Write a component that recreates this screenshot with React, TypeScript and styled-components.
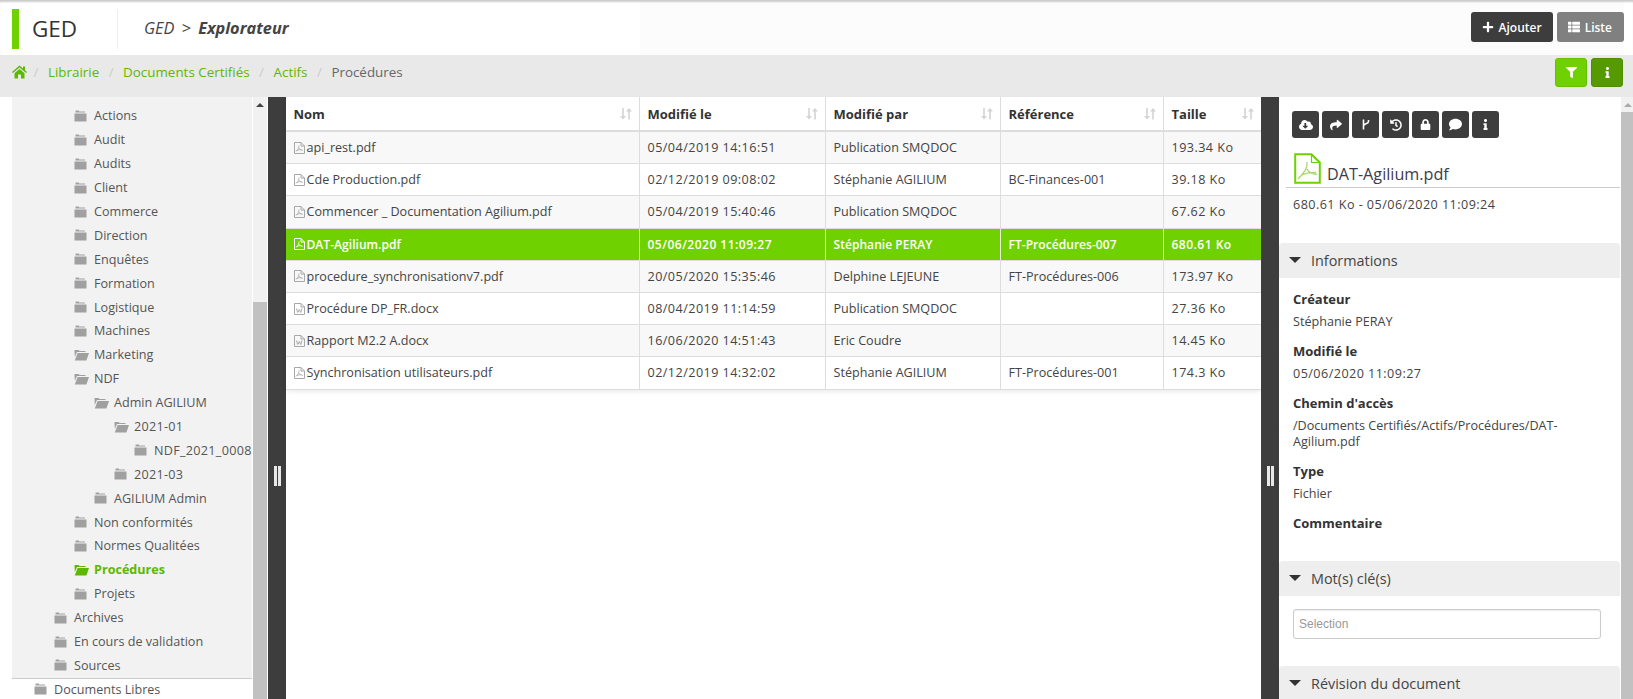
import React from "react";
import styled, { createGlobalStyle } from "styled-components";
import {
  FaCloudDownloadAlt,
  FaComment,
  FaFilter,
  FaHistory,
  FaInfo,
  FaLock,
  FaPlus,
  FaShare,
  FaThList,
} from "react-icons/fa";

const GREEN = "#70d100";
const DARK = "#3d3d3d";

const GlobalStyle = createGlobalStyle`
  html, body {
    margin: 0;
    height: 100%;
    overflow: hidden;
    background: #fff;
    font-family: "Open Sans", "Liberation Sans", sans-serif;
    font-size: 12.6px;
    color: #444;
  }
  * { box-sizing: border-box; }
`;

const Page = styled.div`
  width: 1633px;
  height: 699px;
  display: flex;
  flex-direction: column;
  overflow: hidden;
`;

const Header = styled.header`
  height: 55px;
  flex: none;
  display: flex;
  align-items: center;
  padding: 2px 9px 0 12px;
  background: linear-gradient(to right, #fff 640px, #fcfcfc 640px, #fcfcfc 1624px, #fff 1624px);
  box-shadow: inset 0 3px 2px -1px #ccc;
`;

const Brand = styled.div`
  width: 105px;
  height: 40px;
  border-left: 7px solid ${GREEN};
  padding-left: 13px;
  font-size: 22.5px;
  line-height: 40px;
  color: #333;
`;

const PageTitle = styled.div`
  flex: 1;
  height: 40px;
  line-height: 38px;
  border-left: 1px solid #eee;
  padding-left: 26px;
  font-size: 16.3px;
  font-style: italic;
  word-spacing: 3px;
  color: #444;

  b {
    font-weight: 700;
  }
`;

const HeaderButton = styled.button<{ $muted?: boolean }>`
  height: 30px;
  margin: 0 0 3px 4px;
  padding: 0 ${(p) => (p.$muted ? 12 : 11)}px 0 11px;
  display: inline-flex;
  align-items: center;
  gap: 5px;
  border: 0;
  border-radius: 3px;
  background: ${(p) => (p.$muted ? "#808080" : DARK)};
  color: #fff;
  font: 600 12px "Open Sans", sans-serif;
`;

const Crumbs = styled.nav`
  height: 42px;
  flex: none;
  background: #e9e9e9;
  display: flex;
  align-items: flex-start;
  padding: 3px 10px 0 12px;
  font-size: 13.4px;
  color: #666;
`;

const CrumbList = styled.div`
  flex: 1;
  display: flex;
  align-items: center;
  height: 24px;
  margin-top: 2px;
`;

const Crumb = styled.span<{ $current?: boolean }>`
  color: ${(p) => (p.$current ? "#666" : "#5cb800")};
  display: inline-flex;
  align-items: center;
`;

const HomeCrumb = styled(Crumb)`
  margin-right: -3px;
`;

const Sep = styled.span`
  color: #ccc;
  padding: 0 9.5px;
`;

const SquareButton = styled.button<{ $pressed?: boolean }>`
  width: 32px;
  height: 29px;
  margin-left: 4px;
  padding: 0;
  display: inline-flex;
  align-items: center;
  justify-content: center;
  border: 1px solid ${(p) => (p.$pressed ? "#4e8f00" : "#66c000")};
  border-radius: 3px;
  background: ${(p) => (p.$pressed ? "#559a00" : GREEN)};
  color: #fff;
`;

const Main = styled.main`
  flex: 1;
  min-height: 0;
  display: flex;
`;

const TreeColumn = styled.aside`
  width: 268px;
  flex: none;
  padding-left: 12px;
  display: flex;
`;

const Tree = styled.div`
  width: 240px;
  flex: none;
  overflow: hidden;
  display: flex;
  flex-direction: column;
`;

const TreeBody = styled.div`
  background: #f2f2f2;
  padding-top: 7px;
  padding-bottom: 1px;
  border-bottom: 1px solid #ccc;
`;

const TreeRow = styled.div<{ $level: number; $active?: boolean; $numeric?: boolean }>`
  height: 23.9px;
  display: flex;
  align-items: center;
  white-space: nowrap;
  padding-left: ${(p) => 22 + p.$level * 20}px;
  color: ${(p) => (p.$active ? "#5cb800" : "#555")};
  font-weight: ${(p) => (p.$active ? 700 : 400)};
  letter-spacing: ${(p) => (p.$numeric ? "0.3px" : "0")};
`;

const FolderSlot = styled.span`
  width: 20px;
  flex: none;
  display: flex;
  align-items: center;
`;

const Track = styled.div`
  width: 14px;
  margin-left: 1px;
  flex: none;
  background: #f1f1f1;
  position: relative;
  display: flex;
  flex-direction: column;
`;

const ScrollArrow = styled.div`
  height: 15px;
  flex: none;
  display: flex;
  align-items: center;
  justify-content: center;

  &::before {
    content: "";
    border: 4px solid transparent;
    border-top: 0;
    border-bottom: 4px solid ${(p) => p.color || "#444"};
  }
`;

const Thumb = styled.div<{ $top: number }>`
  flex: 1;
  margin-top: ${(p) => p.$top}px;
  background: #c1c1c1;
`;

const Splitter = styled.div`
  width: 18px;
  flex: none;
  background: ${DARK};
  display: flex;
  align-items: center;
  justify-content: center;
  gap: 1px;
  padding-top: 156px;

  &::before,
  &::after {
    content: "";
    width: 3px;
    height: 20px;
    background: #e8e8e8;
  }
`;

const TablePane = styled.section`
  width: 975px;
  flex: none;
`;

const Table = styled.div`
  box-shadow: 0 2px 4px rgba(0, 0, 0, 0.08);
  border-radius: 0 0 4px 4px;
`;

const COLUMNS = "354px 186px 175px 163px 97px";

const HeadRow = styled.div`
  display: grid;
  grid-template-columns: ${COLUMNS};
  height: 35px;
  border-bottom: 2px solid #ddd;
  background: #fff;
`;

const HeadCell = styled.div`
  display: flex;
  align-items: center;
  justify-content: space-between;
  padding: 0 7px 0 7.5px;
  font-weight: 700;
  font-size: 13px;
  color: #333;
  border-right: 1px solid #ddd;

  &:last-child {
    border-right: 0;
  }
`;

const BodyRow = styled.div<{ $selected?: boolean; $odd?: boolean }>`
  display: grid;
  grid-template-columns: ${COLUMNS};
  height: 32.2px;
  border-bottom: 1px solid #ddd;
  background: ${(p) => (p.$selected ? GREEN : p.$odd ? "#f8f8f8" : "#fff")};
  color: ${(p) => (p.$selected ? "#fff" : "#444")};
  font-weight: ${(p) => (p.$selected ? 600 : 400)};
  font-size: ${(p) => (p.$selected ? "12.1px" : "12.6px")};
`;

const Cell = styled.div<{ $selected?: boolean; $numeric?: boolean }>`
  display: flex;
  align-items: center;
  gap: 2px;
  padding: 0 7.5px;
  letter-spacing: ${(p) => (p.$numeric ? "0.45px" : "0")};
  border-right: 1px solid ${(p) => (p.$selected ? "#e8f8d8" : "#ddd")};
  white-space: nowrap;

  &:last-child {
    border-right: 0;
  }
`;

const Details = styled.aside`
  flex: 1;
  min-width: 0;
  display: flex;
`;

const DetailsBody = styled.div`
  width: 341px;
  flex: none;
  overflow: hidden;
  display: flex;
  flex-direction: column;

  & > * {
    flex: none;
  }
`;

const Toolbar = styled.div`
  display: flex;
  gap: 3px;
  padding: 14px 0 0 13px;
`;

const ToolButton = styled.button`
  width: 27px;
  height: 27px;
  padding: 0;
  display: inline-flex;
  align-items: center;
  justify-content: center;
  border: 0;
  border-radius: 3px;
  background: ${DARK};
  color: #fff;
`;

const FileTitle = styled.div`
  display: flex;
  align-items: flex-end;
  gap: 6px;
  margin: 15px 0 0 7px;
  padding: 0 0 3px 8px;
  height: 35px;
  border-bottom: 1px solid #ccc;
  font-size: 16.2px;
  line-height: 20px;
  color: #3c3c4a;
`;

const FileMeta = styled.div`
  padding: 8px 0 0 14px;
  height: 55px;
  letter-spacing: 0.45px;
`;

const PanelHeader = styled.div`
  height: 35px;
  padding: 0 0 1px 10px;
  display: flex;
  align-items: center;
  gap: 10px;
  background: #eee;
  border-radius: 4px 4px 0 0;
  font-size: 14.4px;
  color: #444;

  &::before {
    content: "";
    border: 6.5px solid transparent;
    border-bottom: 0;
    border-top: 6.5px solid #333;
  }
`;

const InfoList = styled.dl`
  margin: 0;
  padding: 12px 0 0 14px;
  height: 283px;
`;

const InfoLabel = styled.dt`
  font-weight: 700;
  font-size: 13px;
  line-height: 18px;
  color: #333;
  margin-top: 12.5px;

  &:first-child {
    margin-top: 0;
  }
`;

const InfoValue = styled.dd<{ $numeric?: boolean }>`
  margin: 5.5px 0 0;
  line-height: 16px;
  width: 310px;
  letter-spacing: ${(p) => (p.$numeric ? "0.45px" : "0")};
`;

const KeywordBox = styled.div`
  height: 70px;
  padding: 13px 0 0 14px;
`;

const KeywordInput = styled.input`
  width: 308px;
  height: 30px;
  border: 1px solid #ccc;
  border-radius: 3px;
  box-shadow: inset 0 1px 1px rgba(0, 0, 0, 0.08);
  padding: 0 5px;
  font: 12px "Liberation Sans", Arial, sans-serif;

  &::placeholder {
    color: #999;
    opacity: 1;
  }
`;

const HomeIcon = () => (
  <svg width="15" height="14" viewBox="0 0 15 14" fill="#5cb800">
    <path d="M7.500 0.500L11 3.600V1.500h2v3.800l2 1.700-0.900 1L7.500 2.400 0.900 8 0 7zM2.500 8.200L7.500 4l5 4.200v5.300H9V9.500H6v4H2.500z" />
  </svg>
);

const FolderClosed = ({ color = "#a0a0a0" }: { color?: string }) => (
  <svg width="13" height="12" viewBox="0 0 13 12" fill={color}>
    <path d="M2 0.500h3v1h6v1H1.500V1zM0.500 3.500h12v8h-12z" />
  </svg>
);

const FolderOpen = ({ color = "#a0a0a0" }: { color?: string }) => (
  <svg width="15" height="12" viewBox="0 0 15 12" fill={color}>
    <path d="M0.500 1h4l1 1h6v1H3L0.800 8zM3.600 4H15l-2.600 7.500H0.800z" />
  </svg>
);

const PdfIcon = ({ color = "#a8a8a8" }: { color?: string }) => (
  <svg width="11" height="12" viewBox="0 0 11 12" fill="none" stroke={color} style={{ flex: "none" }}>
    <path d="M0.500 0.500h6.500l3.500 3.500v7.500h-10zM7 0.500v3.500h3.500" />
    <path d="M5 3.500c0.300 2-1 4-3 6M5 6c0.500 1.200 2 2.200 4 2.400M2.600 8.600c2-0.800 3.500-1 5-1" strokeWidth="0.8" />
  </svg>
);

const LargePdfIcon = () => (
  <svg width="27" height="31" viewBox="0 0 27 31" fill="none" style={{ flex: "none" }}>
    <path d="M1.200 1.200h16.300l8.300 8.300v20.300H1.200z" stroke={GREEN} strokeWidth="2" />
    <path d="M17.500 1.200v8.300h8.300" stroke={GREEN} strokeWidth="1.200" />
    <path
      d="M13 9c0.800 5-2.500 11-9 17M13 16c1.500 3 5 5 10 5.500M7 22c5-2 10-3 15-2.500"
      stroke="#a4d96a"
      strokeWidth="1.300"
    />
  </svg>
);

const WordIcon = () => (
  <svg width="11" height="12" viewBox="0 0 11 12" fill="none" stroke="#a8a8a8" style={{ flex: "none" }}>
    <path d="M0.500 0.500h6.500l3.500 3.500v7.500h-10zM7 0.500v3.500h3.500" />
    <path d="M2.500 5.500l1.200 4 1.600-3 1.400 3 1.300-4" strokeWidth="1" />
  </svg>
);

const BranchIcon = () => (
  <svg width="9" height="11" viewBox="0 0 9 11" fill="none" stroke="#fff" strokeWidth="1.600">
    <path d="M2.500 0.500v10M7.500 1v1.500c0 2.500-5 2-5 4.500" />
  </svg>
);

const SortIcon = () => (
  <svg width="12" height="13" viewBox="0 0 12 13" fill="#d4d4d4" style={{ flex: "none" }}>
    <path d="M2.200 1h1.600v8H6L3 12.500 0 9h2.200zM8.200 12.500h1.600v-8H12L9 1 6 4.500h2.200z" />
  </svg>
);

type Node = { label: string; level: number; open?: boolean; active?: boolean };

const treeNodes: Node[] = [
  { label: "Actions", level: 2 },
  { label: "Audit", level: 2 },
  { label: "Audits", level: 2 },
  { label: "Client", level: 2 },
  { label: "Commerce", level: 2 },
  { label: "Direction", level: 2 },
  { label: "Enquêtes", level: 2 },
  { label: "Formation", level: 2 },
  { label: "Logistique", level: 2 },
  { label: "Machines", level: 2 },
  { label: "Marketing", level: 2, open: true },
  { label: "NDF", level: 2, open: true },
  { label: "Admin AGILIUM", level: 3, open: true },
  { label: "2021-01", level: 4, open: true },
  { label: "NDF_2021_0008", level: 5 },
  { label: "2021-03", level: 4 },
  { label: "AGILIUM Admin", level: 3 },
  { label: "Non conformités", level: 2 },
  { label: "Normes Qualitées", level: 2 },
  { label: "Procédures", level: 2, open: true, active: true },
  { label: "Projets", level: 2 },
  { label: "Archives", level: 1 },
  { label: "En cours de validation", level: 1 },
  { label: "Sources", level: 1 },
];

const files = [
  ["api_rest.pdf", "05/04/2019 14:16:51", "Publication SMQDOC", "", "193.34 Ko"],
  ["Cde Production.pdf", "02/12/2019 09:08:02", "Stéphanie AGILIUM", "BC-Finances-001", "39.18 Ko"],
  ["Commencer _ Documentation Agilium.pdf", "05/04/2019 15:40:46", "Publication SMQDOC", "", "67.62 Ko"],
  ["DAT-Agilium.pdf", "05/06/2020 11:09:27", "Stéphanie PERAY", "FT-Procédures-007", "680.61 Ko"],
  ["procedure_synchronisationv7.pdf", "20/05/2020 15:35:46", "Delphine LEJEUNE", "FT-Procédures-006", "173.97 Ko"],
  ["Procédure DP_FR.docx", "08/04/2019 11:14:59", "Publication SMQDOC", "", "27.36 Ko"],
  ["Rapport M2.2 A.docx", "16/06/2020 14:51:43", "Eric Coudre", "", "14.45 Ko"],
  ["Synchronisation utilisateurs.pdf", "02/12/2019 14:32:02", "Stéphanie AGILIUM", "FT-Procédures-001", "174.3 Ko"],
];

const headers = ["Nom", "Modifié le", "Modifié par", "Référence", "Taille"];

const TreeItem = ({ node }: { node: Node }) => {
  const color = node.active ? "#5cb800" : undefined;
  return (
    <TreeRow $level={node.level} $active={node.active} $numeric={/\d/.test(node.label)}>
      <FolderSlot>{node.open ? <FolderOpen color={color} /> : <FolderClosed color={color} />}</FolderSlot>
      {node.label}
    </TreeRow>
  );
};

export default function App() {
  return (
    <>
      <GlobalStyle />
      <Page>
        <Header>
          <Brand>GED</Brand>
          <PageTitle>
            GED &gt; <b>Explorateur</b>
          </PageTitle>
          <HeaderButton>
            <FaPlus size={12} /> Ajouter
          </HeaderButton>
          <HeaderButton $muted>
            <FaThList size={12} /> Liste
          </HeaderButton>
        </Header>

        <Crumbs>
          <CrumbList>
            <HomeCrumb>
              <HomeIcon />
            </HomeCrumb>
            <Sep>/</Sep>
            <Crumb>Librairie</Crumb>
            <Sep>/</Sep>
            <Crumb>Documents Certifiés</Crumb>
            <Sep>/</Sep>
            <Crumb>Actifs</Crumb>
            <Sep>/</Sep>
            <Crumb $current>Procédures</Crumb>
          </CrumbList>
          <SquareButton>
            <FaFilter size={11} />
          </SquareButton>
          <SquareButton $pressed>
            <FaInfo size={11} />
          </SquareButton>
        </Crumbs>

        <Main>
          <TreeColumn>
            <Tree>
              <TreeBody>
                {treeNodes.map((n) => (
                  <TreeItem key={n.label} node={n} />
                ))}
              </TreeBody>
              <TreeItem node={{ label: "Documents Libres", level: 0 }} />
            </Tree>
            <Track>
              <ScrollArrow />
              <Thumb $top={190} />
            </Track>
          </TreeColumn>

          <Splitter />

          <TablePane>
            <Table>
              <HeadRow>
                {headers.map((h) => (
                  <HeadCell key={h}>
                    {h}
                    <SortIcon />
                  </HeadCell>
                ))}
              </HeadRow>
              {files.map((row, i) => {
                const selected = i === 3;
                return (
                  <BodyRow key={row[0]} $selected={selected} $odd={i % 2 === 0}>
                    {row.map((value, c) => (
                      <Cell key={c} $selected={selected} $numeric={c === 1 || c === 4}>
                        {c === 0 &&
                          (value.endsWith("docx") ? (
                            <WordIcon />
                          ) : (
                            <PdfIcon color={selected ? "#fff" : "#a8a8a8"} />
                          ))}
                        {value}
                      </Cell>
                    ))}
                  </BodyRow>
                );
              })}
            </Table>
          </TablePane>

          <Splitter />

          <Details>
            <DetailsBody>
              <Toolbar>
                <ToolButton><FaCloudDownloadAlt size={14} /></ToolButton>
                <ToolButton><FaShare size={12} /></ToolButton>
                <ToolButton><BranchIcon /></ToolButton>
                <ToolButton><FaHistory size={12} /></ToolButton>
                <ToolButton><FaLock size={11} /></ToolButton>
                <ToolButton><FaComment size={13} /></ToolButton>
                <ToolButton><FaInfo size={11} /></ToolButton>
              </Toolbar>
              <FileTitle>
                <LargePdfIcon />
                DAT-Agilium.pdf
              </FileTitle>
              <FileMeta>680.61 Ko - 05/06/2020 11:09:24</FileMeta>
              <PanelHeader>Informations</PanelHeader>
              <InfoList>
                <InfoLabel>Créateur</InfoLabel>
                <InfoValue>Stéphanie PERAY</InfoValue>
                <InfoLabel>Modifié le</InfoLabel>
                <InfoValue $numeric>05/06/2020 11:09:27</InfoValue>
                <InfoLabel>Chemin d'accès</InfoLabel>
                <InfoValue>/Documents Certifiés/Actifs/Procédures/DAT-Agilium.pdf</InfoValue>
                <InfoLabel>Type</InfoLabel>
                <InfoValue>Fichier</InfoValue>
                <InfoLabel>Commentaire</InfoLabel>
              </InfoList>
              <PanelHeader>Mot(s) clé(s)</PanelHeader>
              <KeywordBox>
                <KeywordInput placeholder="Selection" readOnly />
              </KeywordBox>
              <PanelHeader>Révision du document</PanelHeader>
            </DetailsBody>
            <Track>
              <ScrollArrow color="#aaa" />
              <Thumb $top={0} />
            </Track>
          </Details>
        </Main>
      </Page>
    </>
  );
}
